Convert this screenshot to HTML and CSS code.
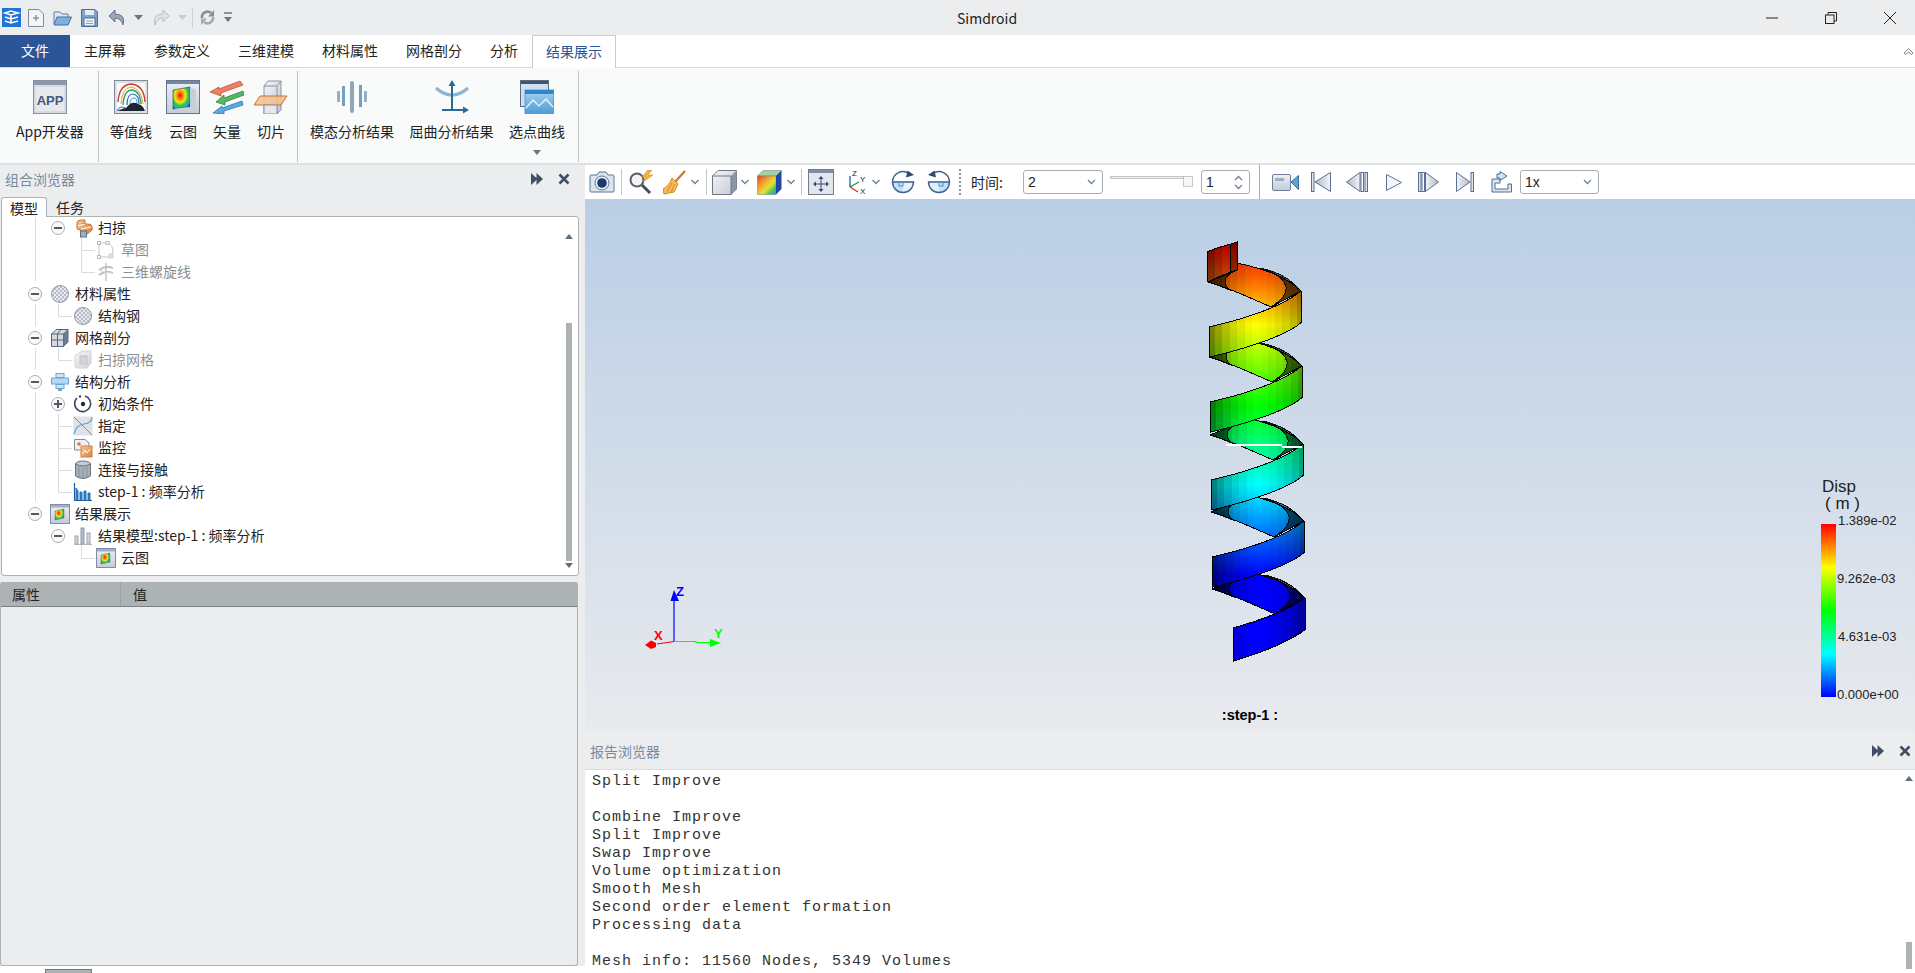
FILE: index.html
```html
<!DOCTYPE html>
<html lang="zh-CN">
  <head>
    <meta charset="UTF-8" />
    <title>Simdroid</title>
    <link rel="stylesheet" href="styles.css">
  </head>
  <body>
    <!-- shared gradients and small icons -->
    <svg class="defs">
      <defs>
        <linearGradient id="frame" x1="0" y1="0" x2="0" y2="1"><stop offset="0" stop-color="#eef1f5"/><stop offset="1" stop-color="#c3ccd9"/></linearGradient>
        <linearGradient id="steel" x1="0" y1="0" x2="1" y2="1"><stop offset="0" stop-color="#f4f5f7"/><stop offset="1" stop-color="#c4c8cf"/></linearGradient>
        <linearGradient id="skyb" x1="0" y1="0" x2="0" y2="1"><stop offset="0" stop-color="#a8d4f2"/><stop offset="1" stop-color="#4f9bd3"/></linearGradient>
        <linearGradient id="orangeb" x1="0" y1="0" x2="1" y2="1"><stop offset="0" stop-color="#f8c79a"/><stop offset="1" stop-color="#dd7d33"/></linearGradient>
        <linearGradient id="playb" x1="0" y1="0" x2="1" y2="0"><stop offset="0" stop-color="#f4f6f9"/><stop offset="1" stop-color="#aeb9c8"/></linearGradient>
        <linearGradient id="playr" x1="1" y1="0" x2="0" y2="0"><stop offset="0" stop-color="#f4f6f9"/><stop offset="1" stop-color="#aeb9c8"/></linearGradient>
        <linearGradient id="cubemap" x1="0" y1="0" x2="1" y2="1">
          <stop offset="0" stop-color="#e6402a"/><stop offset=".35" stop-color="#f2a62a"/><stop offset=".6" stop-color="#e6e23a"/><stop offset=".8" stop-color="#4fc85a"/><stop offset="1" stop-color="#1f9fd8"/>
        </linearGradient>
        <radialGradient id="cloudmap" cx=".42" cy=".38" r=".72">
          <stop offset="0" stop-color="#e8101a"/><stop offset=".28" stop-color="#f59a10"/><stop offset=".45" stop-color="#f0e81a"/><stop offset=".65" stop-color="#2fc83c"/><stop offset=".85" stop-color="#19a7d8"/><stop offset="1" stop-color="#1b3fc0"/>
        </radialGradient>
        <pattern id="checker" width="4" height="4" patternUnits="userSpaceOnUse"><rect width="4" height="4" fill="#e8eaee"/><rect width="2" height="2" fill="#b7bdc8"/><rect x="2" y="2" width="2" height="2" fill="#b7bdc8"/></pattern>

        <symbol id="i-sweep" viewBox="0 0 20 20">
          <path d="M4 9 L4 5 Q4 2 8 2 L12 2 L12 6 L9 6 L15 6 Q19 6 19 9 L19 12 L13 17 L8 17 L8 12 Q3 12 4 9Z" fill="url(#orangeb)" stroke="#c96f2b"/>
          <path d="M5 8 L12 6 M8 11 L18 9" stroke="#fff" stroke-width="1.2" fill="none"/>
          <rect x="7.5" y="13" width="6" height="6" fill="#9fb0c4" stroke="#5d6f87"/>
        </symbol>
        <symbol id="i-sketch" viewBox="0 0 20 20">
          <path d="M3 3 H11 Q17 5 17 11 Q17 15 14 17 H3 Z" fill="none" stroke="#b5b8bd"/>
          <rect x="1.5" y="1.5" width="3" height="3" fill="#fff" stroke="#aaa"/><rect x="10" y="1.5" width="3" height="3" fill="#fff" stroke="#aaa"/><rect x="1.5" y="15.5" width="3" height="3" fill="#fff" stroke="#aaa"/>
          <circle cx="15" cy="16" r="2.5" fill="#d8d8d8" stroke="#b5b5b5" stroke-dasharray="1 1"/>
        </symbol>
        <symbol id="i-helix" viewBox="0 0 20 20">
          <path d="M10 1 V19" stroke="#bbb" stroke-width="1.6"/>
          <path d="M3 8 Q10 3 17 6 M3 13 Q10 8 17 11" stroke="#aaa" stroke-width="1.8" fill="none"/>
          <path d="M3 8 Q8 11 17 11" stroke="#ccc" fill="none"/>
        </symbol>
        <symbol id="i-material" viewBox="0 0 20 20">
          <circle cx="10" cy="10" r="8.5" fill="url(#checker)" stroke="#8c99ae"/>
        </symbol>
        <symbol id="i-mesh" viewBox="0 0 20 20">
          <path d="M1.5 6 L6 1.5 H18 V14 L13.5 18.5 H1.5Z" fill="#d6dae1" stroke="#55657c"/>
          <path d="M1.5 6 H13.5 V18.5 M13.5 6 L18 1.5 M7.5 6 V18.5 M1.5 12 H13.5 M7 6 L11 1.5 M13.5 12 L18 8" fill="none" stroke="#55657c"/>
          <path d="M13.5 6 L18 1.5 V14 L13.5 18.5Z" fill="#6a7a92"/>
        </symbol>
        <symbol id="i-sweepmesh" viewBox="0 0 20 20">
          <path d="M2 7 Q2 4 5 4 L9 1 H18 V13 L14 18 H4 Q2 18 2 16Z" fill="url(#steel)" stroke="#c6c8cc"/>
          <rect x="7" y="6" width="7" height="8" fill="#c8cacd" stroke="#b2b4b8"/>
        </symbol>
        <symbol id="i-analysis" viewBox="0 0 20 20">
          <rect x="6" y="1.5" width="8" height="4" fill="#cfe5f6" stroke="#6aa6d2"/>
          <rect x="1.5" y="6" width="17" height="6" fill="#b6d8f2" stroke="#6aa6d2"/>
          <rect x="6" y="12.5" width="8" height="4" fill="#cfe5f6" stroke="#6aa6d2"/>
          <rect x="8" y="17" width="4" height="2" fill="#6aa6d2"/>
        </symbol>
        <symbol id="i-init" viewBox="0 0 20 20">
          <path d="M12 2 A8 8 0 1 1 4 4" fill="none" stroke="#3b4a66" stroke-width="1.6"/>
          <circle cx="10" cy="10" r="2.2" fill="#1f2d47"/><circle cx="7" cy="2.5" r="1.2" fill="#3b4a66"/>
        </symbol>
        <symbol id="i-spec" viewBox="0 0 20 20">
          <rect x="0.5" y="0.5" width="19" height="19" fill="#dfe2e7"/>
          <path d="M1 1 L19 19" stroke="#7e8a9b" fill="none"/>
          <path d="M1 18 Q3 9 11 8 T19 1" stroke="#5ea3d6" stroke-width="1.2" fill="none"/>
        </symbol>
        <symbol id="i-monitor" viewBox="0 0 20 20">
          <path d="M1.5 1.5 H12 L16 5 V12 H1.5Z" fill="#eef0f3" stroke="#7f8a9b"/>
          <path d="M6 4 V8 M4 6 H8" stroke="#c85a24"/>
          <rect x="8" y="8" width="11" height="11" fill="url(#orangeb)" stroke="#d0834a"/>
          <path d="M9.5 16 L12 12 L14 15 L17 11" stroke="#fff" fill="none"/>
        </symbol>
        <symbol id="i-contact" viewBox="0 0 20 20">
          <ellipse cx="10" cy="4" rx="7.5" ry="3" fill="#c3cad0" stroke="#69767f"/>
          <path d="M2.5 4 V16 Q10 21 17.5 16 V4 Q10 8 2.5 4Z" fill="#a6afb6" stroke="#69767f"/>
          <path d="M6 7 V17 M10 8 V18 M14 7 V17" stroke="#8a959d"/>
        </symbol>
        <symbol id="i-step" viewBox="0 0 20 20">
          <path d="M1.5 1 V18.5 H19" stroke="#1d5d9b" stroke-width="1.2" fill="none"/>
          <path d="M3 18 V6 L5 9 V18 M7 18 V10 H9 V18 M11 18 V9 H13 V18 M15 18 V11 H17 V18" fill="#2a78bd" stroke="#2a78bd"/>
        </symbol>
        <symbol id="i-result" viewBox="0 0 20 20">
          <rect x="0.5" y="0.5" width="19" height="19" fill="url(#frame)" stroke="#7f8ea5"/>
          <rect x="1" y="1" width="18" height="2.5" fill="#9fb0c8"/>
          <path d="M5 7 L14 5 V14 L5 16Z" fill="url(#cloudmap)" stroke="#555" stroke-width=".4"/>
        </symbol>
        <symbol id="i-model" viewBox="0 0 20 20">
          <path d="M1 18.5 H19" stroke="#b9bfc7"/>
          <rect x="2" y="10" width="3" height="8" fill="#d4d8de" stroke="#9aa3b0"/>
          <rect x="8" y="2" width="3" height="16" fill="#aebccd" stroke="#8a98aa"/>
          <rect x="14" y="7" width="3" height="11" fill="#d4d8de" stroke="#9aa3b0"/>
        </symbol>
        <symbol id="i-chev" viewBox="0 0 8 6">
          <path d="M.5 1 L4 4.5 L7.5 1" fill="none" stroke="#6f7f92" stroke-width="1.3"/>
        </symbol>
        <symbol id="i-fast" viewBox="0 0 12 12">
          <path d="M0 0 L6.5 6 L0 12Z M5.5 0 L12 6 L5.5 12Z" fill="#3f4e62"/>
        </symbol>
        <symbol id="i-close" viewBox="0 0 12 12">
          <path d="M1.5 1.5 L10.5 10.5 M10.5 1.5 L1.5 10.5" stroke="#3f4e62" stroke-width="2.6"/>
        </symbol>
      </defs>
    </svg>

    <header class="titlebar">
      <div class="qat">
        <svg class="q-logo" width="19" height="19" viewBox="0 0 19 19"><rect width="19" height="19" fill="#1e74d8"/><path d="M3 5 L9 3 L16 5 L9 7Z M3 9 L9 11 L16 9 M3 13 L9 15 L16 13 M9 7 V15" fill="none" stroke="#fff" stroke-width="1.6"/></svg>
        <svg class="q-new" width="16" height="18" viewBox="0 0 16 18"><path d="M.5 .5 H11 L15.5 5 V17.5 H.5Z" fill="#f3f4f6" stroke="#7d8ca3"/><path d="M8 6 V12 M5 9 H11" stroke="#5f6e83"/></svg>
        <svg class="q-open" width="19" height="17" viewBox="0 0 19 17"><path d="M1 15 V3 H7 L9 5 H15 V8" fill="#dfe6ef" stroke="#5d7ea6"/><path d="M1 16 L4 8 H18.5 L15 16Z" fill="#7fb0dc" stroke="#3f6fa3"/></svg>
        <svg class="q-save" width="17" height="18" viewBox="0 0 17 18"><path d="M.5 .5 H14 L16.5 3 V17.5 H.5Z" fill="#7ea3c9" stroke="#4b6f96"/><rect x="4" y="1" width="9" height="5" fill="#e5ecf4"/><rect x="3" y="9" width="11" height="8" fill="#f2f5f9" stroke="#4b6f96"/><path d="M5 12 H12 M5 14.5 H12" stroke="#8aa0b8"/></svg>
        <svg class="q-undo" width="18" height="17" viewBox="0 0 18 17"><path d="M7 1 L1 7 L7 13 V9 Q13 9 15 16 Q18 5 7 5Z" fill="#9aa6b6" stroke="#677487"/></svg>
        <svg class="q-tri" width="9" height="5" viewBox="0 0 9 5"><path d="M0 0 H9 L4.5 5Z" fill="#6c7480"/></svg>
        <svg class="q-redo" width="18" height="17" viewBox="0 0 18 17"><path d="M11 1 L17 7 L11 13 V9 Q5 9 3 16 Q0 5 11 5Z" fill="#e0e3e8" stroke="#b6bcc6"/></svg>
        <svg class="q-tri" width="9" height="5" viewBox="0 0 9 5"><path d="M0 0 H9 L4.5 5Z" fill="#c9ccd1"/></svg>
        <i class="q-sep"></i>
        <svg class="q-sync" width="15" height="17" viewBox="0 0 15 17"><path d="M2 9 A5.5 5.5 0 0 1 11 4" fill="none" stroke="#858e9a" stroke-width="2.6"/><path d="M14 1 V7.5 H8Z" fill="#858e9a"/><path d="M13 8 A5.5 5.5 0 0 1 4 13" fill="none" stroke="#a4abb5" stroke-width="2.6"/><path d="M1 16 V9.5 H7Z" fill="#a4abb5"/></svg>
        <svg class="q-more" width="8" height="11" viewBox="0 0 8 11"><path d="M0 1 H8" stroke="#6c7480" stroke-width="1.5"/><path d="M0 5 H8 L4 10Z" fill="#6c7480"/></svg>
      </div>
      <div class="app-name">Simdroid</div>
      <div class="win-btns">
        <svg width="12" height="12" viewBox="0 0 12 12"><path d="M0 6 H12" stroke="#222" stroke-width="1"/></svg>
        <svg width="12" height="12" viewBox="0 0 12 12"><rect x=".5" y="3" width="8.5" height="8.5" fill="none" stroke="#222"/><path d="M3 3 V.5 H11.5 V9 H9" fill="none" stroke="#222"/></svg>
        <svg width="12" height="12" viewBox="0 0 12 12"><path d="M0 0 L12 12 M12 0 L0 12" stroke="#222"/></svg>
      </div>
    </header>

    <nav class="tabs">
      <div class="tab file-tab">文件</div>
      <div class="tab">主屏幕</div>
      <div class="tab">参数定义</div>
      <div class="tab">三维建模</div>
      <div class="tab">材料属性</div>
      <div class="tab">网格剖分</div>
      <div class="tab">分析</div>
      <div class="tab active">结果展示</div>
      <svg class="collapse" width="11" height="9" viewBox="0 0 11 9"><path d="M1 6 L5.5 1.5 L10 6 L8.5 7.5 L5.5 5 L2.5 7.5Z" fill="#fff" stroke="#7c8692"/></svg>
    </nav>

    <section class="ribbon">
      <div class="rb-group g1">
        <div class="rb-item">
          <svg class="rb-icon" viewBox="0 0 34 34"><rect x=".5" y=".5" width="33" height="33" fill="#d5dae3" stroke="#8592a6"/><rect x="1" y="1" width="32" height="4" fill="#8c99ad"/><rect x="3" y="7" width="28" height="24" fill="#e6e9ee"/><text x="17" y="25" class="app-mark">APP</text></svg>
          <span>App开发器</span>
        </div>
      </div>
      <div class="rb-group g2">
        <div class="rb-item">
          <svg class="rb-icon" viewBox="0 0 34 34"><rect x=".5" y=".5" width="33" height="33" fill="#dde1e7" stroke="#7f8a9c"/><rect x="3" y="3" width="28" height="28" fill="#fafbfc"/><path d="M4 22 Q5 5 17 4 Q30 5 31 22" fill="none" stroke="#d43b30" stroke-width="1.4"/><path d="M7 24 Q8 8 17 7 Q27 8 29 24" fill="none" stroke="#e2a23a" stroke-width="1"/><path d="M9 25 Q10 10 18 10 Q26 11 27 24" fill="none" stroke="#36a845" stroke-width="1.4"/><path d="M13 25 Q13 14 19 14 Q25 15 25 24" fill="none" stroke="#3c65c8" stroke-width="1.2"/><path d="M16 24 Q16 18 20 18 Q23 18 23 24" fill="none" stroke="#2f9bd6" stroke-width="1"/><path d="M3 31 Q9 27 12 28 Q18 20 24 24 Q29 25 31 31Z" fill="#1e2530"/><path d="M3 31 Q6 25 11 28" fill="#dfe9f7" stroke="#3c65c8"/></svg>
          <span>等值线</span>
        </div>
        <div class="rb-item cloud-item">
          <svg class="rb-icon" viewBox="0 0 34 34"><rect x=".5" y=".5" width="33" height="33" fill="url(#frame)" stroke="#66758c"/><rect x="1" y="1" width="32" height="3" fill="#7588a3"/><path d="M7 10 L24 7 V27 L7 29Z" fill="url(#cloudmap)" stroke="#30384a" stroke-width=".6"/><path d="M24 7 L30 10 V29 L7 29 L24 27Z" fill="#c9ced6"/></svg>
          <span>云图</span>
        </div>
        <div class="rb-item">
          <svg class="rb-icon" viewBox="0 0 34 34"><path d="M0 12 L9 7 L9 9 L30 1 L33 5 L11 13 L11 16Z" fill="#ef8067" stroke="#b6472f" stroke-width=".7"/><path d="M6 22 L14 15 L14 18 L33 11 L34 15 L15 22 L15 25Z" fill="#55b75f" stroke="#28793a" stroke-width=".7"/><path d="M3 33 L12 26 L12 28 L32 21 L33 25 L14 31 L14 34Z" fill="#58a9e4" stroke="#2a6ca6" stroke-width=".7"/></svg>
          <span>矢量</span>
        </div>
        <div class="rb-item">
          <svg class="rb-icon" viewBox="0 0 34 34"><path d="M10 6 L14 1 H27 V30 L23 34 H10Z" fill="url(#steel)" stroke="#8b94a3"/><path d="M10 6 H23 V34 M23 6 L27 1" fill="none" stroke="#8b94a3"/><path d="M6 16 H33 L27 25 H0Z" fill="#f4c08e" fill-opacity=".85" stroke="#c8722c"/><path d="M10 25 V34 H23 V25Z" fill="#e6e8ec" stroke="#8b94a3"/></svg>
          <span>切片</span>
        </div>
      </div>
      <div class="rb-group g3">
        <div class="rb-item">
          <svg class="rb-icon" viewBox="0 0 34 34"><rect x="15" y="1" width="4" height="32" rx="2" fill="#8fa6b8"/><rect x="7" y="6" width="3" height="20" fill="#75a0bd"/><rect x="2" y="11" width="3" height="11" fill="#8fb0c7"/><rect x="24" y="5" width="3" height="22" fill="#75a0bd"/><rect x="29" y="11" width="3" height="11" fill="#8fb0c7"/></svg>
          <span>模态分析结果</span>
        </div>
        <div class="rb-item">
          <svg class="rb-icon" viewBox="0 0 34 34"><path d="M1 8 Q17 22 33 8" fill="none" stroke="#8bb4d3" stroke-width="3"/><path d="M17 2 V30" stroke="#276a92" stroke-width="2"/><path d="M17 0 L13.5 6 H20.5Z" fill="#276a92"/><path d="M7 30 H31" stroke="#276a92" stroke-width="2"/><path d="M34 30 L28 26.5 V33.5Z" fill="#276a92"/></svg>
          <span>屈曲分析结果</span>
        </div>
        <div class="rb-item">
          <svg class="rb-icon" viewBox="0 0 34 34"><rect x=".5" y=".5" width="28" height="26" fill="#cfe0ef" stroke="#586c85"/><rect x="1" y="1" width="27" height="3" fill="#405570"/><rect x="5" y="10" width="28.5" height="23.5" fill="url(#skyb)" stroke="#5e9fcf"/><rect x="5" y="10" width="28.5" height="4" fill="#2f86c8"/><path d="M6 28 L13 20 L19 26 L26 19 L33 27" fill="none" stroke="#eef6fb" stroke-width="1.2"/></svg>
          <span>选点曲线</span>
          <svg class="rb-more" width="8" height="5" viewBox="0 0 8 5"><path d="M0 0 H8 L4 5Z" fill="#6c7480"/></svg>
        </div>
      </div>
    </section>

    <main class="workspace">
      <aside class="left">
        <div class="dock-head">
          <span>组合浏览器</span>
          <div class="dock-btns">
            <svg width="12" height="12"><use href="#i-fast"/></svg>
            <svg width="12" height="12"><use href="#i-close"/></svg>
          </div>
        </div>
        <div class="sub-tabs">
          <div class="sub-tab on">模型</div>
          <div class="sub-tab">任务</div>
        </div>
        <div class="tree">
          <div class="tree-rows">
            <svg class="tree-lines" viewBox="2 217 560 352" width="560" height="352">
              <path d="M35.5 217 V281 M35.5 304 V326 M35.5 348 V370 M35.5 392 V501 M58.5 304 V316.5 H72 M58.5 348 V360.5 H72 M58.5 414 V492.5 H72 M58.5 426.5 H72 M58.5 448.5 H72 M58.5 470.5 H72 M81.5 236 V272.5 H95 M81.5 250.5 H95 M81.5 544 V558.5 H95"/>
            </svg>
            <div class="row l2"><i class="toggle"></i><svg class="ic"><use href="#i-sweep"/></svg><span>扫掠</span></div>
            <div class="row l3 muted"><svg class="ic"><use href="#i-sketch"/></svg><span>草图</span></div>
            <div class="row l3 muted"><svg class="ic"><use href="#i-helix"/></svg><span>三维螺旋线</span></div>
            <div class="row l1"><i class="toggle"></i><svg class="ic"><use href="#i-material"/></svg><span>材料属性</span></div>
            <div class="row l2 leaf"><svg class="ic"><use href="#i-material"/></svg><span>结构钢</span></div>
            <div class="row l1"><i class="toggle"></i><svg class="ic"><use href="#i-mesh"/></svg><span>网格剖分</span></div>
            <div class="row l2 leaf muted"><svg class="ic"><use href="#i-sweepmesh"/></svg><span>扫掠网格</span></div>
            <div class="row l1"><i class="toggle"></i><svg class="ic"><use href="#i-analysis"/></svg><span>结构分析</span></div>
            <div class="row l2"><i class="toggle plus"></i><svg class="ic"><use href="#i-init"/></svg><span>初始条件</span></div>
            <div class="row l2 leaf"><svg class="ic"><use href="#i-spec"/></svg><span>指定</span></div>
            <div class="row l2 leaf"><svg class="ic"><use href="#i-monitor"/></svg><span>监控</span></div>
            <div class="row l2 leaf"><svg class="ic"><use href="#i-contact"/></svg><span>连接与接触</span></div>
            <div class="row l2 leaf"><svg class="ic"><use href="#i-step"/></svg><span>step-1 : 频率分析</span></div>
            <div class="row l1"><i class="toggle"></i><svg class="ic"><use href="#i-result"/></svg><span>结果展示</span></div>
            <div class="row l2"><i class="toggle"></i><svg class="ic"><use href="#i-model"/></svg><span>结果模型:step-1 : 频率分析</span></div>
            <div class="row l3"><svg class="ic"><use href="#i-result"/></svg><span>云图</span></div>
          </div>
          <div class="vscroll">
            <i class="arr-up"></i>
            <i class="thumb"></i>
            <i class="arr-down"></i>
          </div>
        </div>
        <div class="props">
          <div class="props-head">
            <div class="col-name">属性</div>
            <div class="col-val">值</div>
          </div>
        </div>
        <div class="hscroll"><i></i></div>
      </aside>

      <div class="right">
        <div class="toolbar">
          <svg class="ml4" width="26" height="22" viewBox="0 0 26 22"><path d="M1 5 Q1 4 2 4 H8 L10 1 H17 L19 4 H24 Q25 4 25 5 V20 Q25 21 24 21 H2 Q1 21 1 20Z" fill="#dbe4ef" stroke="#5d7595"/><circle cx="13" cy="12" r="7" fill="#eef2f7" stroke="#5d7595"/><circle cx="13" cy="12" r="4.8" fill="#1e3a6a"/></svg>
          <i class="tsep ml6"></i>
          <svg class="ml6" width="27" height="25" viewBox="0 0 27 25"><circle cx="9" cy="10" r="6.5" fill="#f1f3f6" stroke="#555c66" stroke-width="2"/><path d="M14 15 L22 23" stroke="#444b55" stroke-width="3"/><path d="M20 0 L14 7 H18 L15 12 L25 5 H20 L24 0Z" fill="#f2b04c" stroke="#d98a1e" stroke-width=".6"/></svg>
          <svg class="ml8" width="23" height="25" viewBox="0 0 23 25"><path d="M22 1 L12 12" stroke="#c77a2c" stroke-width="2.2"/><path d="M9 8 L15 14 L11 22 L1 24 L0 19 Q6 16 9 8Z" fill="#f5bb57" stroke="#d68a25"/><path d="M4 22 L9 13 M8 22 L12 14" stroke="#d68a25"/></svg>
          <svg class="ml5" width="8" height="6"><use href="#i-chev"/></svg>
          <i class="tsep ml7"></i>
          <svg class="ml5" width="25" height="25" viewBox="0 0 25 25"><path d="M.5 6 L6 .5 H24.5 V19 L19 24.5 H.5Z" fill="url(#steel)" stroke="#6c7889"/><path d="M19 6 L24.5 .5 V19 L19 24.5Z" fill="#8a96a8"/><path d="M.5 6 H19 V24.5" fill="none" stroke="#6c7889"/></svg>
          <svg class="ml4" width="8" height="6"><use href="#i-chev"/></svg>
          <svg class="ml8" width="25" height="25" viewBox="0 0 25 25"><path d="M.5 6 L6 .5 H24.5 L19 6Z" fill="#9fd3a0" stroke="#6c7889" stroke-width=".5"/><rect x=".5" y="6" width="18.5" height="18.5" fill="url(#cubemap)" stroke="#6c7889" stroke-width=".5"/><path d="M19 6 L24.5 .5 V19 L19 24.5Z" fill="#1e47a8"/></svg>
          <svg class="ml5" width="8" height="6"><use href="#i-chev"/></svg>
          <i class="tsep ml6"></i>
          <svg class="ml6" width="26" height="26" viewBox="0 0 26 26"><rect x=".5" y=".5" width="25" height="25" fill="#e3e7ed" stroke="#6f7d91"/><rect x="1" y="1" width="24" height="3" fill="#7f8da2"/><path d="M13 7 L10.5 10 H15.5Z M13 23 L10.5 20 H15.5Z M5 15 L8 12.5 V17.5Z M21 15 L18 12.5 V17.5Z" fill="#2f4a70"/><path d="M13 10 V20 M8 15 H18" stroke="#2f4a70"/></svg>
          <svg class="ml12" width="21" height="24" viewBox="0 0 21 24"><path d="M4 6 V17" stroke="#1c6fc0" stroke-width="1.4"/><path d="M4 17 L13 12" stroke="#1f9a3a" stroke-width="1.4"/><path d="M4 17 L12 22" stroke="#d63333" stroke-width="1.4"/><text x="6" y="6" class="ax">Z</text><text x="14" y="12" class="ax">Y</text><text x="14" y="24" class="ax">X</text></svg>
          <svg class="ml5" width="8" height="6"><use href="#i-chev"/></svg>
          <svg class="ml11" width="24" height="24" viewBox="0 0 24 24"><path d="M1.5 12 H22.5 A10.5 10.5 0 0 1 1.5 12Z" fill="#e4f1fa"/><path d="M1.5 12 H12 V22.5 A10.5 10.5 0 0 1 1.5 12Z" fill="#c3e0f4"/><path d="M1.5 12 H22.5 A10.5 10.5 0 0 1 1.5 12 A10.5 10.5 0 0 1 18 3.5" fill="none" stroke="#3d5f8a" stroke-width="1.4"/><path d="M23 5 L15 7.5 L16.5 0.5Z" fill="#2c4c78"/><rect x="8" y="12" width="4" height="4" fill="none" stroke="#4d93c7"/></svg>
          <svg class="ml12" width="24" height="24" viewBox="0 0 24 24"><path d="M1.5 12 H22.5 A10.5 10.5 0 0 1 1.5 12Z" fill="#e4f1fa"/><path d="M22.5 12 H12 V22.5 A10.5 10.5 0 0 0 22.5 12Z" fill="#c3e0f4"/><path d="M22.5 12 H1.5 A10.5 10.5 0 0 0 22.5 12 A10.5 10.5 0 0 0 6 3.5" fill="none" stroke="#3d5f8a" stroke-width="1.4"/><path d="M1 5 L9 7.5 L7.5 0.5Z" fill="#2c4c78"/><rect x="12" y="12" width="4" height="4" fill="none" stroke="#4d93c7"/></svg>
          <i class="tdots ml8"></i>
          <span class="time-label ml10">时间:</span>
          <div class="combo time-combo"><span>2</span><svg width="9" height="6"><use href="#i-chev"/></svg></div>
          <div class="slider ml7"><i class="track"></i><i class="handle"></i></div>
          <div class="combo spin ml8"><span>1</span><div class="spin-arrows"><svg width="9" height="6" class="up"><use href="#i-chev"/></svg><svg width="9" height="6"><use href="#i-chev"/></svg></div></div>
          <i class="tsep tall ml9"></i>
          <svg class="ml12" width="27" height="17" viewBox="0 0 27 17"><rect x=".5" y=".5" width="18" height="16" rx="1.5" fill="url(#frame)" stroke="#6b7f9c"/><rect x="3" y="4" width="9" height="3" fill="#a3aebe"/><path d="M19 8 L26.5 1.5 V15.5Z" fill="#5aa4d6" stroke="#3a6d9e"/></svg>
          <svg class="ml12" width="20" height="20" viewBox="0 0 20 20"><rect x=".5" y=".5" width="2.5" height="19" fill="#dfe4ec" stroke="#5a6f8f"/><path d="M19.5 .5 V19.5 L4 10Z" fill="url(#playr)" stroke="#5a6f8f"/></svg>
          <svg class="ml15" width="22" height="20" viewBox="0 0 22 20"><path d="M14 .5 V19.5 L.5 10Z" fill="url(#playr)" stroke="#5a6f8f"/><rect x="15" y=".5" width="2.5" height="19" fill="#fff" stroke="#5a6f8f"/><rect x="19" y=".5" width="2.5" height="19" fill="#dfe4ec" stroke="#5a6f8f"/></svg>
          <svg class="ml18" width="16" height="17" viewBox="0 0 16 17"><path d="M.5 .5 V16.5 L15.5 8.5Z" fill="#f2f5f9" stroke="#5a6f8f"/></svg>
          <svg class="ml16" width="21" height="20" viewBox="0 0 21 20"><rect x=".5" y=".5" width="2.5" height="19" fill="#dfe4ec" stroke="#5a6f8f"/><rect x="4" y=".5" width="2.5" height="19" fill="#fff" stroke="#5a6f8f"/><path d="M7.5 .5 V19.5 L20.5 10Z" fill="url(#playb)" stroke="#5a6f8f"/></svg>
          <svg class="ml17" width="18" height="20" viewBox="0 0 18 20"><path d="M.5 .5 V19.5 L14 10Z" fill="url(#playb)" stroke="#5a6f8f"/><rect x="15" y=".5" width="2.5" height="19" fill="#dfe4ec" stroke="#5a6f8f"/></svg>
          <svg class="ml17" width="21" height="22" viewBox="0 0 21 22"><path d="M1 8 H9 V12 H4 V18 H17 V13 H20.5 V21 H1Z" fill="#dbe6f2" stroke="#4d6f99"/><path d="M9 0.5 L16 5 L9 9.5 V7 H6 V3 H9Z" fill="#cfe4f6" stroke="#4d6f99"/></svg>
          <div class="combo speed-combo ml8"><span>1x</span><svg width="9" height="6"><use href="#i-chev"/></svg></div>
        </div>

        <div class="viewer">
          <svg class="scene" viewBox="585 199 1330 532" width="1330" height="532">
            <defs>
              <linearGradient id="disp" gradientUnits="userSpaceOnUse" x1="0" y1="245" x2="0" y2="575">
                <stop offset="0" stop-color="#f00000"/><stop offset=".13" stop-color="#ff8200"/><stop offset=".242" stop-color="#ffff00"/><stop offset=".485" stop-color="#00ff00"/><stop offset=".727" stop-color="#00ffff"/><stop offset="1" stop-color="#0000ff"/>
              </linearGradient>
              <linearGradient id="legendmap" x1="0" y1="0" x2="0" y2="1">
                <stop offset="0" stop-color="#ff0000"/><stop offset=".25" stop-color="#ffff00"/><stop offset=".5" stop-color="#00ff00"/><stop offset=".75" stop-color="#00ffff"/><stop offset="1" stop-color="#0000ff"/>
              </linearGradient>
              <!-- stepped so the band shows its facets -->
              <linearGradient id="shade" gradientUnits="userSpaceOnUse" x1="1207" y1="0" x2="1305" y2="0">
                <stop offset="0" stop-opacity=".48"/><stop offset=".077" stop-opacity=".48"/>
                <stop offset=".077" stop-opacity=".36"/><stop offset=".154" stop-opacity=".36"/>
                <stop offset=".154" stop-opacity=".25"/><stop offset=".231" stop-opacity=".25"/>
                <stop offset=".231" stop-opacity=".16"/><stop offset=".308" stop-opacity=".16"/>
                <stop offset=".308" stop-opacity=".09"/><stop offset=".385" stop-opacity=".09"/>
                <stop offset=".385" stop-opacity=".03"/><stop offset=".462" stop-opacity=".03"/>
                <stop offset=".462" stop-opacity="0"/><stop offset=".538" stop-opacity="0"/>
                <stop offset=".538" stop-opacity=".02"/><stop offset=".615" stop-opacity=".02"/>
                <stop offset=".615" stop-opacity=".06"/><stop offset=".692" stop-opacity=".06"/>
                <stop offset=".692" stop-opacity=".11"/><stop offset=".769" stop-opacity=".11"/>
                <stop offset=".769" stop-opacity=".17"/><stop offset=".846" stop-opacity=".17"/>
                <stop offset=".846" stop-opacity=".25"/><stop offset=".923" stop-opacity=".25"/>
                <stop offset=".923" stop-opacity=".36"/><stop offset="1" stop-opacity=".36"/>
              </linearGradient>
              <path id="front" d="M1209 327 C1240 320 1280 308 1301 291 L1302 322 C1285 337 1240 350 1210 357Z"/>
              <path id="frontEnd" d="M1233 321 C1258 314 1288 303 1305 291 L1306 322 C1290 335 1260 346 1234 354Z"/>
              <path id="tab" d="M1207 252 C1215 248 1225 246 1237 242 L1237 270 C1225 274 1215 278 1208 282Z"/>
              <path id="back" d="M1208 282 L1237 270 L1237 263 C1260 268 1285 275 1301 291 L1271 307 C1250 298 1230 288 1208 282Z"/>
              <path id="darkL" d="M1208 282 L1237 270 C1230 273 1225 277 1225 281 C1225 286 1228 289 1232 291 C1223 287 1215 284 1208 282Z"/>
              <path id="darkR" d="M1260 268 C1280 272 1292 280 1301 291 L1271 307 C1280 301 1287 295 1286 287 C1284 278 1275 272 1260 268Z"/>
              <clipPath id="backsClip">
                <use href="#back"/><use href="#back" transform="translate(1 75)"/><use href="#back" transform="translate(2 153)"/><use href="#back" transform="translate(3 230)"/><use href="#back" transform="translate(4 307)"/>
              </clipPath>
              <clipPath id="frontsClip">
                <use href="#tab"/><use href="#front"/><use href="#front" transform="translate(1 75)"/><use href="#front" transform="translate(2 153)"/><use href="#front" transform="translate(3 230)"/><use href="#frontEnd" transform="translate(0 307)"/>
              </clipPath>
            </defs>

            <g class="helix">
              <rect x="1200" y="230" width="110" height="440" fill="url(#disp)" clip-path="url(#backsClip)"/>
              <g class="back-shade">
                <use href="#back"/><use href="#back" transform="translate(1 75)"/><use href="#back" transform="translate(2 153)"/><use href="#back" transform="translate(3 230)"/><use href="#back" transform="translate(4 307)"/>
              </g>
              <g class="back-dark">
                <use href="#darkL"/><use href="#darkR"/>
                <use href="#darkL" transform="translate(1 75)"/><use href="#darkR" transform="translate(1 75)"/>
                <use href="#darkL" transform="translate(2 153)"/><use href="#darkR" transform="translate(2 153)"/>
                <use href="#darkL" transform="translate(3 230)"/><use href="#darkR" transform="translate(3 230)"/>
                <use href="#darkL" transform="translate(4 307)"/><use href="#darkR" transform="translate(4 307)"/>
              </g>
              <rect x="1200" y="230" width="110" height="440" fill="url(#disp)" clip-path="url(#frontsClip)"/>
              <g class="front-shade">
                <use href="#tab"/><use href="#front"/><use href="#front" transform="translate(1 75)"/><use href="#front" transform="translate(2 153)"/><use href="#front" transform="translate(3 230)"/><use href="#frontEnd" transform="translate(0 307)"/>
              </g>
              <path d="M1230 244 L1237 242 V270 L1230 273Z" fill="#000" fill-opacity=".35"/>
              <path d="M1230 244 V273" stroke="#000"/>
              <path d="M1226 444.5 H1282 M1282 447 H1302" stroke="#fff" stroke-width="2"/>
            </g>

            <g class="axis">
              <path d="M674 642 V600" stroke="#0000ff" stroke-width="1.2"/>
              <path d="M674 590 L670.5 601 H679Z" fill="#0000ff"/>
              <path d="M674 641.5 H696 V642.5 H710" stroke="#00ff00" stroke-width="1.2" fill="none"/>
              <path d="M710 639 V647 L721 643Z" fill="#00ff00"/>
              <path d="M674 641.5 L657 644" stroke="#ff0000" stroke-width="1.2"/>
              <path d="M645 645 L651 640.5 L656 643 V647 L651 649Z" fill="#ff0000"/>
              <text x="676" y="596" class="ax-z">Z</text>
              <text x="714" y="638" class="ax-y">Y</text>
              <text x="654" y="640" class="ax-x">X</text>
            </g>

            <g class="legend">
              <text x="1822" y="492" class="leg-title">Disp</text>
              <text x="1825" y="509" class="leg-title">( m )</text>
              <rect x="1821" y="524" width="15" height="173" fill="url(#legendmap)"/>
              <text x="1838" y="525">1.389e-02</text>
              <text x="1837" y="583">9.262e-03</text>
              <text x="1838" y="641">4.631e-03</text>
              <text x="1837" y="699">0.000e+00</text>
            </g>
            <text x="1250" y="720" class="step-name">:step-1 :</text>
          </svg>
        </div>

        <div class="dock-head report-head">
          <span>报告浏览器</span>
          <div class="dock-btns">
            <svg width="12" height="12"><use href="#i-fast"/></svg>
            <svg width="12" height="12"><use href="#i-close"/></svg>
          </div>
        </div>
        <div class="report">
<pre class="log">Split Improve

Combine Improve
Split Improve
Swap Improve
Volume optimization
Smooth Mesh
Second order element formation
Processing data

Mesh info: 11560 Nodes, 5349 Volumes</pre>
          <div class="vscroll log-scroll">
            <i class="arr-up"></i>
            <i class="thumb"></i>
          </div>
        </div>
      </div>
    </main>
  </body>
</html>
```

FILE: styles.css
```css
* {
  box-sizing: border-box;
}

html,
body {
  margin: 0;
  height: 100%;
}

body {
  width: 1915px;
  height: 973px;
  overflow: hidden;
  display: flex;
  flex-direction: column;
  background: #ecedef;
  color: #222;
  font-family: "Noto Sans CJK SC", "Liberation Sans", sans-serif;
  font-size: 14px;
}

svg {
  display: block;
  flex: none;
}

i {
  display: block;
}

.defs {
  position: absolute;
  width: 0;
  height: 0;
}

/* title bar */
.titlebar {
  height: 35px;
  display: flex;
  align-items: center;
  position: relative;
  flex: none;
}

.qat {
  display: flex;
  align-items: center;
  padding-left: 2px;
}

.q-new { margin-left: 7px; }
.q-open { margin-left: 9px; }
.q-save { margin-left: 9px; }
.q-undo { margin-left: 10px; }
.q-tri { margin-left: 8px; }
.q-redo { margin-left: 9px; }
.q-sep { width: 1px; height: 20px; margin-left: 5px; background: #cfd2d6; }
.q-sync { margin-left: 7px; }
.q-more { margin-left: 9px; }

.app-name {
  position: absolute;
  left: 957px;
  top: 8px;
  line-height: 20px;
}

.win-btns {
  display: flex;
  gap: 47px;
  margin-left: auto;
  margin-right: 19px;
}

/* ribbon tabs */
.tabs {
  height: 32px;
  flex: none;
  display: flex;
  align-items: stretch;
  background: #fff;
  position: relative;
}

.tab {
  padding: 0 14px;
  line-height: 31px;
}

.file-tab {
  width: 70px;
  padding: 0;
  text-align: center;
  background: #2b5597;
  color: #fff;
}

.tab.active {
  color: #2b5597;
  background: #fff;
  border: 1px solid #c9cbce;
  border-bottom: 0;
  padding: 0 13px;
  height: 33px;
  z-index: 1;
}

.collapse {
  margin-left: auto;
  margin-right: 1px;
  align-self: center;
}

.ribbon {
  height: 98px;
  flex: none;
  display: flex;
  padding-top: 3px;
  background: #f9fafa;
  border-top: 1px solid #d5d6d8;
  border-bottom: 2px solid #dfe0e2;
}

.rb-group {
  height: 91px;
  display: flex;
  padding-top: 9px;
  border-right: 1px solid #bfc2c6;
}

.g1 { width: 99px; padding-left: 16px; }
.g2 { width: 199px; padding-left: 11px; gap: 10px; }
.g3 { width: 281px; padding-left: 12px; gap: 15.5px; }

.cloud-item {
  margin-left: 4px;
}

.rb-item {
  display: flex;
  flex-direction: column;
  align-items: center;
  white-space: nowrap;
}

.rb-icon {
  width: 34px;
  height: 34px;
  margin-bottom: 7px;
}

.rb-item span {
  line-height: 20px;
}

.rb-more {
  margin-top: 9px;
}

.app-mark {
  font-family: "Liberation Sans", sans-serif;
  font-size: 13px;
  font-weight: bold;
  fill: #47587a;
  text-anchor: middle;
}

/* main area */
.workspace {
  flex: 1;
  display: flex;
  min-height: 0;
}

.left {
  width: 585px;
  flex: none;
  display: flex;
  flex-direction: column;
}

.right {
  width: 1330px;
  display: flex;
  flex-direction: column;
}

.dock-head {
  height: 32px;
  flex: none;
  display: flex;
  align-items: center;
  justify-content: space-between;
  padding: 0 15px 4px 5px;
  color: #7b8a9b;
}

.dock-btns {
  display: flex;
  gap: 15px;
}

.report-head {
  height: 38px;
  padding: 2px 4px 0 5px;
}

.sub-tabs {
  height: 19px;
  flex: none;
  display: flex;
  padding-left: 1px;
  line-height: 20px;
}

.sub-tab {
  width: 46px;
  text-align: center;
}

.sub-tab.on {
  background: #fff;
  border: 1px solid #aeb3b6;
  border-bottom: 0;
  border-radius: 3px 3px 0 0;
  height: 20px;
  z-index: 1;
}

.sub-tab + .sub-tab {
  margin-left: 2px;
  width: 42px;
}

.tree {
  width: 578px;
  height: 360px;
  margin-left: 1px;
  flex: none;
  display: flex;
  background: #fff;
  border: 1px solid #aeb3b6;
  border-radius: 0 3px 3px 3px;
}

.tree-rows {
  flex: 1;
  position: relative;
  line-height: 22px;
  white-space: nowrap;
}

.tree-lines {
  position: absolute;
  left: 0;
  top: 0;
  fill: none;
  stroke: #dcdcdc;
}

.row {
  height: 22px;
  display: flex;
  align-items: center;
  position: relative;
}

.row span {
  margin-left: 5px;
  margin-bottom: 2px;
}

.l1 { padding-left: 26px; }
.l2 { padding-left: 49px; }
.l2.leaf { padding-left: 71px; }
.l3 { padding-left: 94px; }

.muted span {
  color: #8f8f8f;
}

.muted .ic {
  opacity: .8;
}

.ic {
  width: 20px;
  height: 20px;
}

.toggle {
  width: 14px;
  height: 14px;
  margin-right: 8px;
  border: 1px solid #a8adb3;
  border-radius: 50%;
  background: linear-gradient(#4f5a68, #4f5a68) center / 8px 2px no-repeat, #fafafa;
}

.toggle.plus {
  background:
    linear-gradient(#4f5a68, #4f5a68) center / 8px 2px no-repeat,
    linear-gradient(#4f5a68, #4f5a68) center / 2px 8px no-repeat,
    #fafafa;
}

.vscroll {
  width: 12px;
  margin-right: 3px;
  padding-top: 17px;
  display: flex;
  flex-direction: column;
  align-items: center;
}

.arr-up {
  width: 0;
  height: 0;
  border: 4px solid transparent;
  border-top: 0;
  border-bottom: 5px solid #5f6f7d;
}

.arr-down {
  width: 0;
  height: 0;
  margin-top: 2px;
  border: 4px solid transparent;
  border-bottom: 0;
  border-top: 5px solid #5f6f7d;
}

.thumb {
  width: 6px;
  height: 238px;
  margin-top: 84px;
  background: #adb2b5;
}

.props {
  width: 578px;
  height: 384px;
  margin-top: 6px;
  flex: none;
  background: #ecedef;
  border: 1px solid #adb2b5;
  border-top: 0;
  border-radius: 3px;
}

.props-head {
  height: 25px;
  display: flex;
  line-height: 25px;
  background: #adb2b5;
  border-bottom: 1px solid #7b8085;
}

.col-name {
  width: 120px;
  padding-left: 11px;
  border-right: 1px solid #9da2a6;
}

.col-val {
  padding-left: 12px;
}

.hscroll {
  height: 7px;
  flex: none;
  background: #fff;
  padding: 3px 0 0 45px;
}

.hscroll i {
  width: 47px;
  height: 4px;
  background: #adb2b5;
  border: 1px solid #777;
  border-bottom: 0;
}

/* viewer toolbar */
.toolbar {
  height: 34px;
  flex: none;
  display: flex;
  align-items: center;
  background: #fff;
}

.ml4 { margin-left: 4px; }
.ml5 { margin-left: 5px; }
.ml6 { margin-left: 6px; }
.ml7 { margin-left: 7px; }
.ml8 { margin-left: 8px; }
.ml9 { margin-left: 9px; }
.ml10 { margin-left: 10px; }
.ml11 { margin-left: 11px; }
.ml12 { margin-left: 12px; }
.ml15 { margin-left: 15px; }
.ml16 { margin-left: 16px; }
.ml17 { margin-left: 17px; }
.ml18 { margin-left: 18px; }

.tsep {
  width: 1px;
  height: 26px;
  background: #c4c7cb;
}

.tsep.tall {
  height: 34px;
  background: #a9adb2;
}

.tdots {
  width: 2px;
  height: 26px;
  background: repeating-linear-gradient(#8d9299 0 2px, transparent 2px 4px);
}

.time-label {
  width: 31px;
  white-space: nowrap;
}

.combo {
  height: 24px;
  display: flex;
  align-items: center;
  justify-content: space-between;
  padding: 0 6px 0 4px;
  background: #fff;
  border: 1px solid #a9aeb4;
  border-radius: 3px;
  font-family: "Liberation Sans", sans-serif;
}

.time-combo {
  width: 80px;
  margin-left: 21px;
}

.speed-combo {
  width: 79px;
}

.spin {
  width: 49px;
}

.spin-arrows .up {
  transform: scaleY(-1);
  margin-bottom: 3px;
}

.slider {
  width: 83px;
  height: 14px;
  display: flex;
  align-items: flex-start;
  padding-top: 1px;
}

.slider .track {
  flex: 1;
  height: 3px;
  background: #f1f2f3;
  border: 1px solid #c3c6ca;
}

.slider .handle {
  width: 10px;
  height: 11px;
  background: #f6f6f6;
  border: 1px solid #c3c6ca;
}

.axis text,
.legend text,
.ax,
.step-name {
  font-family: "Liberation Sans", sans-serif;
}

.ax {
  font-size: 8px;
  fill: #222;
}

/* 3d view */
.viewer {
  height: 532px;
  flex: none;
  background: linear-gradient(#bacee5, #e8eaee);
}

.helix {
  shape-rendering: crispEdges;
}

.back-shade use {
  fill: url(#shade);
  stroke: #000;
}

.back-dark use {
  fill: #000;
  fill-opacity: .55;
  stroke: #000;
  stroke-opacity: .9;
}

.front-shade use {
  fill: url(#shade);
  stroke: #000;
}

.ax-z,
.ax-y,
.ax-x {
  font-size: 13px;
  font-weight: bold;
}

.ax-z { fill: #0000ff; }
.ax-y { fill: #00ff00; }
.ax-x { fill: #ff0000; }

.legend text {
  font-size: 13px;
  fill: #222;
}

.legend .leg-title {
  font-size: 17px;
}

.step-name {
  font-size: 14.5px;
  font-weight: bold;
  text-anchor: middle;
}

/* report */
.report {
  flex: 1;
  min-height: 0;
  display: flex;
  justify-content: space-between;
  background: #fff;
  border-top: 1px solid #dcdcdc;
  overflow: hidden;
}

.log {
  margin: 0;
  padding: 3px 0 0 7px;
  font-family: "Liberation Mono", monospace;
  font-size: 15px;
  letter-spacing: 1px;
  line-height: 18px;
  color: #333;
}

.log-scroll {
  margin-right: 0;
  padding-top: 6px;
  width: 12px;
}

.log-scroll .thumb {
  height: 27px;
  margin-top: 161px;
}
```
